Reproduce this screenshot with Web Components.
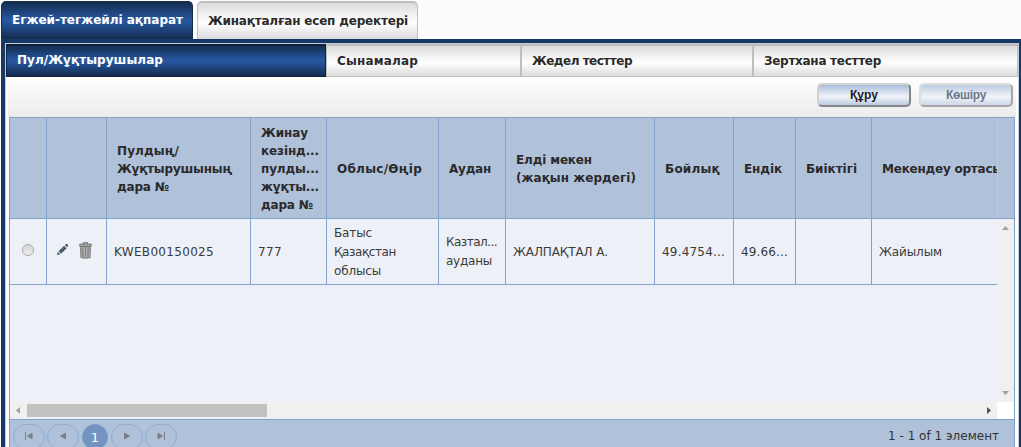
<!DOCTYPE html>
<html lang="kk">
<head>
<meta charset="utf-8">
<title>Пул/Жұқтырушылар</title>
<style>
body{margin:0;width:1021px;height:447px;overflow:hidden;background:#fcfcfc;font-family:"DejaVu Sans",sans-serif;font-size:12px;color:#333}
</style>
</head>
<body>
<app-page></app-page>
<script>
const define=(name,html,ready)=>{
  const t=document.createElement('template');t.innerHTML=html;
  customElements.define(name,class extends HTMLElement{
    connectedCallback(){
      if(this.shadowRoot)return;
      this.attachShadow({mode:'open'}).append(t.content.cloneNode(true));
      if(ready)ready(this,this.shadowRoot);
    }
  });
};

/* One line of text, tracked to a given advance width */
define('fit-line',`<style>:host{display:block;white-space:nowrap}span{display:inline-block}</style><span><slot></slot></span>`,(el,root)=>{
  const s=root.querySelector('span'),w=+el.getAttribute('w'),n=el.textContent.length;
  if(w)s.style.letterSpacing=((w-s.getBoundingClientRect().width)/n)+'px';
});

define('top-tab',`<style>
:host{display:block;box-sizing:border-box;height:38px;padding:9px 0 0 10px;line-height:18px;font-weight:bold;color:#2a2a2a;border:1px solid #bfc0bf;border-width:2px 1px 0;border-radius:5px 5px 0 0;background:linear-gradient(#dcdcdc,#fff 55%,#dcdcdc)}
:host([active]){color:#fff;border-color:#152b49;border-width:1px 1px 0;background:linear-gradient(#142c4d,#2759a3 50%,#142c4e)}
</style><slot></slot>`);

define('sub-tab',`<style>
:host{display:block;box-sizing:border-box;height:33px;padding:6px 0 0 10px;line-height:18px;font-weight:bold;color:#2a2a2a;border:1px solid #bfbfbf;border-top-width:2px;background:linear-gradient(#dcdcdc,#fff 55%,#dcdcdc)}
:host([active]){color:#fff;border-color:#10213f;padding-top:5px;background:linear-gradient(#152d50,#2759a3 50%,#142c4e)}
</style><slot></slot>`);

define('push-button',`<style>
:host{display:flex;box-sizing:border-box;width:94px;height:24px;justify-content:center;border:2px solid;border-color:#d3d3d3 #858585 #858585 #d3d3d3;border-radius:5px;background:linear-gradient(#a9bddb,#e7edf6 50%,#eef2f8 60%,#bccbe2);font:bold 12px/20px "Liberation Sans",sans-serif;color:#1d2129}
:host([disabled]){border-color:#dcdcdc #a6a6a6 #a6a6a6 #dcdcdc;color:#6d7889;background:linear-gradient(#bccbe1,#e9eef5 50%,#f0f3f7 60%,#ccd7e7)}
</style><slot></slot>`);

define('grid-cell',`<style>
:host{display:flex;flex-direction:column;justify-content:center;box-sizing:border-box;min-width:0;overflow:hidden;height:65px;padding:1px 0 0 7px;line-height:19px;border-right:1px solid #82a2cb;color:#3b3b3b}
:host([head]){height:100px;padding:1px 0 0 10px;line-height:18px;font-weight:bold;color:#2a2a2a}
:host([edge]){border-right-color:#c0c8d5}
:host([last]){border-right:0}
:host([icons]){flex-direction:row;align-items:center;justify-content:flex-start;padding:0}
</style><slot></slot>`);

define('row-radio',`<style>:host{display:block;box-sizing:border-box;width:12px;height:12px;margin:-3px 0 0 12px;border:1px solid #aaa;border-radius:50%;background:linear-gradient(#d5d5d5,#eee)}</style>`);

define('pencil-icon',`<style>:host{display:block;width:13px;height:13px;margin:-4px 0 0 9px}svg{display:block}</style>
<svg width="13" height="13" viewBox="0 0 13 13"><path d="M1 12l.8-3.2 2.5 2.4z" fill="#43566a"/><path d="M2.5 8.2l5.7-5.4 2.4 2.4-5.7 5.5z" fill="#3c4f63"/><path d="M3.6 9l5.5-5.1" stroke="#75879a" stroke-width=".7"/><path d="M9 2.1l1.2-1.1c.8-.5 2.4.8 1.8 1.8L11 4.3z" fill="#34475b"/><path d="M8.4 2.4l2.6 2.5M2.2 8.3l2.6 2.6" stroke="#edf1f7" stroke-width=".7"/></svg>`);

define('trash-icon',`<style>:host{display:block;width:13px;height:17px;margin:-3px 0 0 10px}svg{display:block}</style>
<svg width="13" height="17" viewBox="0 0 13 17"><path d="M4.5 2V.7h4V2" fill="none" stroke="#666"/><path d="M1.3 4.5h10.4l-.6 11.2q-4.6 1.2-9.2 0z" fill="#a0a0a0" stroke="#777" stroke-width=".8"/><path d="M4 6l.2 8.3M6.5 6v8.3M9 6l-.2 8.3" stroke="#747474" stroke-width=".8"/><path d="M5.2 6v8.3M7.7 6v8.3" stroke="#c4c4c4" stroke-width=".8"/><rect x=".5" y="2" width="12" height="2.4" rx="1" fill="#a8a8a8" stroke="#666" stroke-width=".8"/></svg>`);

define('v-scroll',`<style>
:host{display:flex;flex-direction:column;justify-content:space-between;align-items:center;box-sizing:border-box;width:17px;height:183px;padding:7px 0;background:#f0f0f0}svg{display:block}
</style><svg width="7" height="4"><path d="M0 4L3.5 0 7 4z" fill="#a0a0a0"/></svg><svg width="7" height="4"><path d="M0 0h7L3.5 4z" fill="#a0a0a0"/></svg>`);

define('h-scroll',`<style>
:host{display:flex;align-items:center;box-sizing:border-box;height:17px;padding:0 6px;background:#f0f0f0}svg{display:block}i{width:240px;height:13px;background:#c1c1c1;margin:0 auto 0 7px}
</style><svg width="4" height="7"><path d="M4 0v7L0 3.5z" fill="#a0a0a0"/></svg><i></i><svg width="4" height="7"><path d="M0 0v7l4-3.5z" fill="#505050"/></svg>`);

define('page-button',`<style>
:host{display:flex;box-sizing:border-box;width:32px;height:26px;align-items:center;justify-content:center;border:1px solid #8fadd3;border-radius:13px}
:host([current]){width:26px;background:#7394c1;border-color:#7899c8;color:#fff;margin:0 1px;font-size:13px}
svg{display:block;margin-top:-2px}
</style><slot></slot>`,(el,root)=>{
  const d={first:'M.5 0v8M7 1.2v5.6L2.5 4z',prev:'M6.5 1.2v5.6L1.5 4z',next:'M1.5 1.2v5.6L6.5 4z',last:'M7.5 0v8M1 1.2v5.6L5.5 4z'}[el.getAttribute('kind')];
  if(d)root.querySelector('slot').insertAdjacentHTML('beforeend',`<svg width="8" height="8"><path d="${d}" fill="#7b7f86" stroke="#7b7f86"/></svg>`);
});

define('data-grid',`<style>
:host{display:block;width:1006px;height:330px;box-sizing:border-box;border:1px solid #82a2cb;border-bottom:0;overflow:hidden;background:#edf1f7}
.row{display:grid;grid-template-columns:37px 60px 144px 76px 112px 67px 149px 79px 62px 76px 126px}
.head{background:#b0c1da;border-bottom:1px solid #82a2cb}
.mid{display:grid;grid-template-columns:987px 17px;height:183px}
.body .row{border-bottom:1px solid #82a2cb}
.bot{display:grid;grid-template-columns:987px 17px;background:#fff}
footer{display:flex;align-items:flex-start;gap:2px;box-sizing:border-box;height:40px;padding:4px 15px 0 3px;border-top:1px solid #82a2cb;background:#b0c1da}
footer fit-line{margin-left:auto;line-height:24px}
</style>
<div class="head row">
<grid-cell head></grid-cell><grid-cell head></grid-cell>
<grid-cell head><fit-line w="62">Пулдың/</fit-line><fit-line w="115">Жұқтырушының</fit-line><fit-line w="52">дара №</fit-line></grid-cell>
<grid-cell head><fit-line w="47">Жинау</fit-line><fit-line w="58">кезінд...</fit-line><fit-line w="58">пулды...</fit-line><fit-line w="58">жұқты...</fit-line><fit-line w="52">дара №</fit-line></grid-cell>
<grid-cell head><fit-line w="85">Облыс/Өңір</fit-line></grid-cell>
<grid-cell head><fit-line w="42">Аудан</fit-line></grid-cell>
<grid-cell head><fit-line w="76">Елді мекен</fit-line><fit-line w="120">(жақын жердегі)</fit-line></grid-cell>
<grid-cell head><fit-line w="55">Бойлық</fit-line></grid-cell>
<grid-cell head><fit-line w="38">Ендік</fit-line></grid-cell>
<grid-cell head><fit-line w="51">Биіктігі</fit-line></grid-cell>
<grid-cell head edge><fit-line w="121">Мекендеу ортасы</fit-line></grid-cell>
</div>
<div class="mid"><div class="body"><div class="row">
<grid-cell icons><row-radio></row-radio></grid-cell>
<grid-cell icons><pencil-icon></pencil-icon><trash-icon></trash-icon></grid-cell>
<grid-cell><fit-line w="100">KWEB00150025</fit-line></grid-cell>
<grid-cell><fit-line w="24">777</fit-line></grid-cell>
<grid-cell><fit-line w="38">Батыс</fit-line><fit-line w="62">Қазақстан</fit-line><fit-line w="47">облысы</fit-line></grid-cell>
<grid-cell><fit-line w="51">Казтал...</fit-line><fit-line w="46">ауданы</fit-line></grid-cell>
<grid-cell><fit-line w="95">ЖАЛПАҚТАЛ А.</fit-line></grid-cell>
<grid-cell><fit-line w="63">49.4754...</fit-line></grid-cell>
<grid-cell><fit-line w="47">49.66...</fit-line></grid-cell>
<grid-cell></grid-cell>
<grid-cell last><fit-line w="63">Жайылым</fit-line></grid-cell>
</div></div><v-scroll></v-scroll></div>
<div class="bot"><h-scroll></h-scroll></div>
<footer><page-button kind="first"></page-button><page-button kind="prev"></page-button><page-button current>1</page-button><page-button kind="next"></page-button><page-button kind="last"></page-button><fit-line w="111">1 - 1 of 1 элемент</fit-line></footer>`);

define('app-page',`<style>
:host{display:block;height:447px;overflow:hidden}
.tabs{display:flex;gap:4px;height:38px;padding:1px 0 0 1px}
.t1{width:192px}.t2{width:221px}
.frame{box-sizing:border-box;height:408px;border:solid #163866;border-width:4px 2px 0 4px;margin-left:1px;background:#fff;}
.inner{box-sizing:border-box;height:404px;border:1px solid #c6ccd6;border-bottom:0;width:1014px}
.subs{display:grid;grid-template-columns:320px 195px 232px 265px}
.panel{margin:0 2px;height:40px;background:linear-gradient(#fff,#ebebeb);display:flex;justify-content:flex-end;gap:8px;box-sizing:border-box;padding:6px 3px 0 0}
.table{padding-left:3px}
</style>
<div class="tabs"><top-tab class="t1" active><fit-line w="171">Егжей-тегжейлі ақпарат</fit-line></top-tab><top-tab class="t2"><fit-line w="200">Жинақталған есеп деректері</fit-line></top-tab></div>
<div class="frame"><div class="inner">
<div class="subs"><sub-tab active><fit-line w="146">Пул/Жұқтырушылар</fit-line></sub-tab><sub-tab><fit-line w="81">Сынамалар</fit-line></sub-tab><sub-tab><fit-line w="100">Жедел тесттер</fit-line></sub-tab><sub-tab><fit-line w="117">Зертхана тесттер</fit-line></sub-tab></div>
<div class="panel"><push-button><fit-line w="28">Құру</fit-line></push-button><push-button disabled><fit-line w="40">Көшіру</fit-line></push-button></div>
<div class="table"><data-grid></data-grid></div>
</div></div>`);
</script>
</body>
</html>
